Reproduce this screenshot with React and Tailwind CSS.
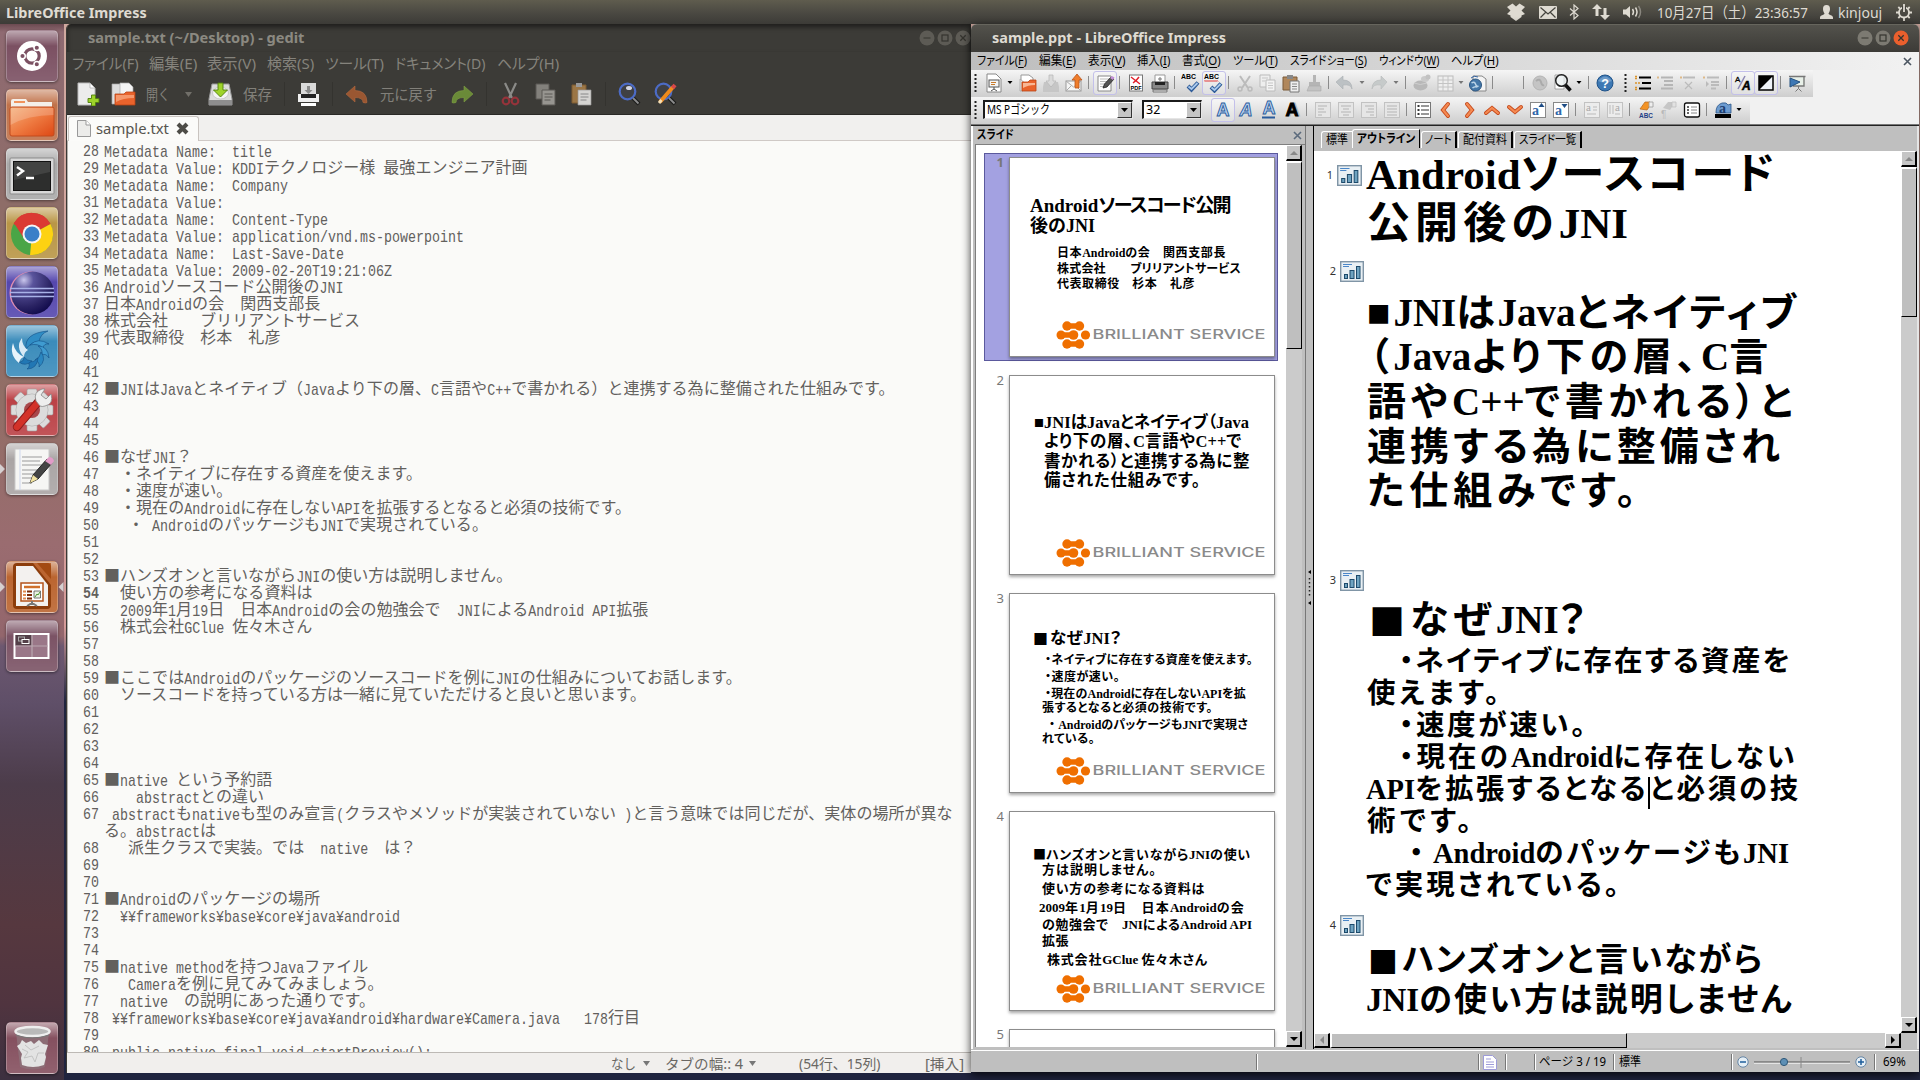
import React, { useLayoutEffect, useRef, useState } from "react";

const CJK = /([\u3000-\u30ff\u3400-\u9fff\uff00-\uffef■]+)/;

/* One line of text stretched to a width: horizontal squeeze for interface labels. */
function Squeeze({ w, className = "", children }) {
  const ref = useRef(null);
  const [k, setK] = useState(1);
  useLayoutEffect(() => {
    if (ref.current.offsetWidth) setK(w / ref.current.offsetWidth);
  }, [w]);
  return (
    <span className={"inline-block whitespace-pre shrink-0 " + className} style={{ width: w }}>
      <span ref={ref} className="inline-block origin-left" style={{ transform: `scaleX(${k})` }}>{children}</span>
    </span>
  );
}

/* One line of document text: extra width is shared between the Japanese characters only. */
function Spread({ w, children }) {
  const ref = useRef(null);
  const [ls, setLs] = useState(0);
  const runs = children.split(CJK).filter(Boolean);
  const n = runs.filter((r) => CJK.test(r)).reduce((a, r) => a + r.length, 0);
  useLayoutEffect(() => {
    if (n) setLs((w - ref.current.getBoundingClientRect().width) / n);
  }, [w, n]);
  return (
    <span ref={ref} className="inline-block whitespace-pre">
      {runs.map((r, i) =>
        CJK.test(r) ? <span key={i} style={{ letterSpacing: ls }}>{r}</span> : <span key={i}>{r}</span>
      )}
    </span>
  );
}

/* ---------- top panel ---------- */
function TopPanel() {
  return (
    <div className="h-[24px] shrink-0 flex items-center bg-linear-to-b from-[#5f5c4e] via-[#4c4a43] to-[#3c3b37] text-[#dfdbd2] text-[15px] pl-[6px]">
      <Squeeze w={141} className="font-bold text-[15px]">LibreOffice Impress</Squeeze>
      <div className="ml-[1360px] flex items-center">
        <svg width="18" height="18" viewBox="0 0 18 18" fill="#dfdbd2"><path d="M5.500 0.500 9 3.500l3.500-3L18 4 14.500 7.500 18 11l-3.500 1.500v1.500L9 18l-5.500-4v-1.500L0 11 3.500 7.500 0 4z" /></svg>
        <svg className="ml-[14px]" width="18" height="13" viewBox="0 0 18 13"><rect width="18" height="13" rx="1" fill="#dfdbd2" /><path d="M1.500 1.500 9 8l7.500-6.500M1.500 11.500 6.500 6.500M16.500 11.500l-5-5" fill="none" stroke="#45443e" strokeWidth="1.200" /></svg>
        <svg className="ml-[12px]" width="10" height="16" viewBox="0 0 10 16" fill="none" stroke="#dfdbd2" strokeWidth="1.200"><path d="M1 4.500 9 11.500 5 15V1l4 3.500L1 11.500" /></svg>
        <svg className="ml-[13px]" width="18" height="16" viewBox="0 0 18 16" fill="#dfdbd2"><path d="M5 0l5 5H6.500v7H3.500V5H0zM13 16l-5-5h3.500V4h3v7H18z" /></svg>
        <svg className="ml-[13px]" width="20" height="16" viewBox="0 0 20 16"><path d="M0 5.500h3L7 2v12l-4-3.500H0z" fill="#dfdbd2" /><path d="M9.500 5q2 3 0 6M12.500 3.500q3 4.500 0 9" fill="none" stroke="#dfdbd2" strokeWidth="1.500" /><path d="M15.500 2q4 6 0 12" fill="none" stroke="#8a877f" strokeWidth="1.500" /></svg>
        <Squeeze w={151} className="ml-[14px] text-[15px]">10月27日（土）23:36:57</Squeeze>
        <svg className="ml-[12px]" width="13" height="14" viewBox="0 0 13 14" fill="#dfdbd2"><path d="M6.500 0C9 0 10 1.500 10 4c0 2-1 3.500-1.500 4.500 0 1.500 4.500 1.500 4.500 4V14H0v-1.500C0 10 4.500 10 4.500 8.500 4 7.500 3 6 3 4 3 1.500 4 0 6.500 0z" /></svg>
        <Squeeze w={44} className="ml-[5px] text-[15px]">kinjouj</Squeeze>
        <svg className="ml-[14px]" width="16" height="17" viewBox="0 0 16 17" fill="none" stroke="#dfdbd2"><circle cx="8" cy="8.500" r="5" strokeWidth="1.800" /><path d="M8 0v3M8 14v3M0 8.500h3M13 8.500h3M2.300 3 4 4.700M13.700 3 12 4.700M2.300 14 4 12.300M13.700 14 12 12.300" strokeWidth="1.800" /><path d="M8 2v6" stroke="#45443e" strokeWidth="4" /><path d="M8 1.500V8" strokeWidth="1.800" /></svg>
      </div>
    </div>
  );
}

/* ---------- launcher ---------- */
function Tile({ className = "", children, pip, active }) {
  return (
    <div className="flex items-center w-[64px] h-[52px] mb-[7px] shrink-0">
      <div className="w-[6px] flex items-center">{pip && <svg width="5" height="10" viewBox="0 0 5 10"><path d="M0 0l5 5-5 5z" fill="#d6d0d1" /></svg>}</div>
      <div className={"w-[52px] h-[52px] rounded-[5px] border border-white/25 flex items-center justify-center bg-linear-to-b from-white/50 via-white/0 via-30% to-white/10 shadow-[0_1px_3px_rgba(0,0,0,.45)] " + className}>
        <svg width="48" height="48" viewBox="0 0 48 48">{children}</svg>
      </div>
      <div className="w-[6px] flex items-center">{active && <svg width="6" height="10" viewBox="0 0 5 10"><path d="M5 0L0 5l5 5z" fill="#d6d0d1" /></svg>}</div>
    </div>
  );
}

function Launcher() {
  return (
    <div className="w-[64px] shrink-0 flex flex-col pt-[6px] bg-[linear-gradient(to_bottom,#6b4a51_0px,#8f6a72_8px,#8e6d68_180px,#926e66_380px,#9a6c70_520px,#93666c_612px,#6d5870_622px,#5f4f68_680px,#4c3c4a_760px,#56383f_900px,#50343f_980px,#3c3040_1056px)] h-full">
      <Tile className="bg-[#7b5062]">
        <circle cx="24" cy="24" r="15" fill="#fff" />
        <circle cx="24" cy="24" r="7.200" fill="none" stroke="#7b5062" strokeWidth="3.200" />
        <g stroke="#fff" strokeWidth="1.500" fill="#7b5062"><circle cx="14.500" cy="24" r="2.800" /><circle cx="28.800" cy="15.800" r="2.800" /><circle cx="28.800" cy="32.200" r="2.800" /></g>
      </Tile>
      <Tile className="bg-[#c0724a]">
        <path d="M3 10q0-2 2-2h13l2 3h24v10H3z" fill="#f4efe9" /><path d="M6 11h11" stroke="#f0935c" strokeWidth="2" />
        <defs><linearGradient id="fo" x1="0" y1="0" x2="1" y2="1"><stop offset="0" stopColor="#f4ae78" /><stop offset=".5" stopColor="#ee7a41" /><stop offset="1" stopColor="#dd4814" /></linearGradient></defs>
        <rect x="2" y="16" width="44" height="29" rx="2" fill="url(#fo)" stroke="#c24a1c" /><path d="M2.500 17h43v7Q20 24 2.500 34z" fill="#fff" opacity=".2" />
      </Tile>
      <Tile className="bg-[#a9a9a9]">
        <rect x="2" y="8" width="44" height="36" rx="1" fill="#d8d8d8" stroke="#8b8b8b" /><rect x="5.500" y="11.500" width="37" height="29" fill="#2d2e2d" stroke="#111" /><path d="M6 12h36v10L6 30z" fill="#fff" opacity=".1" />
        <path d="M9 17l6 4-6 4.500M18 28h8" stroke="#fff" strokeWidth="2.400" fill="none" />
      </Tile>
      <Tile className="bg-[#b99646]">
        <circle cx="24" cy="25" r="21" fill="#4aa546" /><path d="M24 25 5.500 15A21 21 0 0 1 42.500 15z" fill="#db3a33" /><path d="M24 25 42.500 15A21 21 0 0 1 22 46z" fill="#fdd212" /><path d="M24 15h18.500A21 21 0 0 0 6 14l9 14z" fill="#db3a33" /><circle cx="24" cy="25" r="9.500" fill="#f5f5f5" /><circle cx="24" cy="25" r="7.500" fill="#3a7fc8" />
      </Tile>
      <Tile className="bg-[#5547ae]">
        <defs><radialGradient id="ec" cx=".3" cy=".2" r=".9"><stop offset="0" stopColor="#c9c6ec" /><stop offset=".25" stopColor="#5a549c" /><stop offset=".7" stopColor="#2a2363" /><stop offset="1" stopColor="#0c0648" /></radialGradient></defs>
        <circle cx="23" cy="25" r="21.500" fill="#e08db0" /><circle cx="24.500" cy="25" r="21.500" fill="url(#ec)" />
        <path d="M2 20.500h44M2 24.500h44M2 28.500h44" stroke="#a9b2e8" strokeWidth="1.300" />
      </Tile>
      <Tile className="bg-[#3b8cbb]">
        <g stroke="#124f86" strokeWidth=".6">
          <path d="M18 22Q16 6 40 4 32 7 31 15 24 14 18 22z" fill="#2f8cc4" />
          <path d="M22 18q8-8 19-1-5-1-6 4-5-5-13-3z" fill="#3f9bd0" />
          <path d="M30 19q10 0 11 12-3-5-7-3 1-6-4-9z" fill="#3f9bd0" />
          <path d="M33 25q6 8-2 15 1-5-4-7 5-2 6-8z" fill="#2a86c0" />
          <path d="M30 31q-1 11-11 11 4-3 1-7 6 1 10-4z" fill="#2177b4" />
          <path d="M24 34q-7 6-13 1 5 0 5-5 3 4 8 4z" fill="#2177b4" />
        </g>
        <path d="M5 16q-4 12 6 20 1-5 5-6Q7 26 5 16z" fill="#e9f4fa" /><path d="M14 11q-7 9 2 19 0-5 4-7-6-4-6-12z" fill="#d8eaf5" />
      </Tile>
      <Tile className="bg-[#bb4146]">
        <g transform="translate(24 24)" fill="#dcdcdc" stroke="#9d9d9d" strokeWidth=".6">
          {[0, 45, 90, 135].map((a) => <rect key={a} x="-5" y="-21" width="10" height="42" rx="1.500" transform={`rotate(${a})`} />)}
          <circle r="16" />
        </g>
        <circle cx="24" cy="24" r="15.500" fill="#dcdcdc" /><circle cx="24" cy="24" r="8" fill="#a8484c" />
        <path d="M9 41 31 15" stroke="#8f1d1d" strokeWidth="8.500" strokeLinecap="round" /><path d="M9 41 29 17.500" stroke="#d33229" strokeWidth="6.500" strokeLinecap="round" />
        <path d="M28 15q-3-9 6-12l3 0-4 6 5 4 5-5q3 10-6 12-3 1-5 0z" fill="#eee" stroke="#888" strokeWidth=".8" />
      </Tile>
      <Tile className="bg-[#aaa5a5]" pip>
        <rect x="7" y="4" width="34" height="41" fill="#f6f6f4" stroke="#c9c9c9" /><path d="M12 4v41" stroke="#cfd8ee" /><path d="M14 12h20M14 16h18M14 20h20M14 25h17M14 29h12M14 33h14M14 38h10" stroke="#9a9a9a" />
        <path d="M22 38l3-8L39 14l5 4-14 16z" fill="#444" stroke="#222" /><path d="M22 38l3-8 5 4z" fill="#f2e3a0" /><path d="M37 16l4-4q4 0 5 4l-3 4z" fill="#e29cc8" />
      </Tile>
      <div className="h-[59px] shrink-0" />
      <Tile className="bg-[#bb6530]" pip active>
        <path d="M9 0h30q4 0 4 4v38q0 4-4 4H9q-4 0-4-4V4q0-4 4-4z" fill="#8c3d0c" /><path d="M25 0h18v22z" fill="#bb6530" /><path d="M8 3h17l15 19v21H8z" fill="#f3f1ef" /><path d="M29 0h10q4 0 4 4v12z" fill="#a34a12" />
        <rect x="13" y="20" width="22" height="18" fill="#fff" stroke="#b4531b" strokeWidth="1.500" /><path d="M16 24h16" stroke="#d0702b" strokeWidth="2.500" /><path d="M15 28.500h3M15 32h3M15 35.500h3" stroke="#e08a50" strokeWidth="2" /><path d="M19 28.500h5M19 32h5M19 35.500h5" stroke="#7c2c08" strokeWidth="2" /><path d="M26 35v-7h6.500v7z" fill="#e9f2e2" stroke="#555" strokeWidth=".8" /><path d="M27 34l2-3 1 1 2-3" fill="none" stroke="#4c9a32" /><path d="M24 38v3M19 43l5-3 5 3" stroke="#777" strokeWidth="2" fill="none" />
      </Tile>
      <Tile className="bg-[#7b5365]">
        <rect x="6.500" y="12" width="34" height="24" fill="#9a7788" stroke="#fff" strokeWidth="2" /><rect x="7.500" y="13" width="16" height="10.500" fill="#544049" /><path d="M24 13v22M8 24h32" stroke="#b9a8b0" strokeWidth="1.200" /><rect x="10.500" y="15" width="6" height="4" fill="none" stroke="#aaa" /><rect x="14" y="17.500" width="7" height="4" fill="#544049" stroke="#fff" />
      </Tile>
      <div className="mt-auto mb-[-1px]">
        <Tile className="bg-[#85505f]">
          <path d="M8 8h33l-4 35q-12 5-25 0z" fill="#8d6f78" opacity=".9" /><path d="M9 22l3-2 2-4 4 3 5-2 3 3 5-4 4 4 5 1-3 9 1 3-2 8q-11 4-22 0l-1-7 1-4z" fill="#e3e3e3" /><path d="M14 25l6 3-4 6 8-2 3 6 3-9 6 0M17 21l6 5 8-4" fill="none" stroke="#c3c3c3" />
          <ellipse cx="24.500" cy="7.500" rx="17" ry="4.500" fill="#b9b9b9" stroke="#eee" strokeWidth="2.500" /><path d="M8 11q16 6 33 0" fill="none" stroke="#777" />
        </Tile>
      </div>
    </div>
  );
}

/* ---------- gedit ---------- */
function RoundButton({ kind, className }) {
  return (
    <svg className={className} width="16" height="16" viewBox="0 0 16 16">
      <circle cx="8" cy="8" r="7.500" />
      {kind === "min" && <path d="M4.500 8h7" stroke="#35342f" strokeWidth="1.200" />}
      {kind === "max" && <rect x="5" y="5" width="6" height="6" fill="none" stroke="#35342f" strokeWidth="1.200" />}
      {kind === "close" && <path d="M5.300 5.300l5.400 5.400M10.700 5.300l-5.400 5.400" stroke="#35342f" strokeWidth="1.300" />}
    </svg>
  );
}

const fileLines = [
  ["28", "Metadata Name:  title"],
  ["29", "Metadata Value: KDDIテクノロジー様 最強エンジニア計画"],
  ["30", "Metadata Name:  Company"],
  ["31", "Metadata Value:"],
  ["32", "Metadata Name:  Content-Type"],
  ["33", "Metadata Value: application/vnd.ms-powerpoint"],
  ["34", "Metadata Name:  Last-Save-Date"],
  ["35", "Metadata Value: 2009-02-20T19:21:06Z"],
  ["36", "Androidソースコード公開後のJNI"],
  ["37", "日本Androidの会　関西支部長"],
  ["38", "株式会社　　ブリリアントサービス"],
  ["39", "代表取締役　杉本　礼彦"],
  ["40", ""], ["41", ""],
  ["42", "■JNIはJavaとネイティブ（Javaより下の層、C言語やC++で書かれる）と連携する為に整備された仕組みです。"],
  ["43", ""], ["44", ""], ["45", ""],
  ["46", "■なぜJNI？"],
  ["47", "　・ネイティブに存在する資産を使えます。"],
  ["48", "　・速度が速い。"],
  ["49", "　・現在のAndroidに存在しないAPIを拡張するとなると必須の技術です。"],
  ["50", "　 ・ AndroidのパッケージもJNIで実現されている。"],
  ["51", ""], ["52", ""],
  ["53", "■ハンズオンと言いながらJNIの使い方は説明しません。"],
  ["54", "　使い方の参考になる資料は"],
  ["55", "　2009年1月19日　日本Androidの会の勉強会で　JNIによるAndroid API拡張"],
  ["56", "　株式会社GClue 佐々木さん"],
  ["57", ""], ["58", ""],
  ["59", "■ここではAndroidのパッケージのソースコードを例にJNIの仕組みについてお話します。"],
  ["60", "　ソースコードを持っている方は一緒に見ていただけると良いと思います。"],
  ["61", ""], ["62", ""], ["63", ""], ["64", ""],
  ["65", "■native という予約語"],
  ["66", "　　abstractとの違い"],
  ["67", " abstractもnativeも型のみ宣言(クラスやメソッドが実装されていない )と言う意味では同じだが、実体の場所が異な"],
  ["", "る。abstractは"],
  ["68", "　 派生クラスで実装。では　native　は？"],
  ["69", ""], ["70", ""],
  ["71", "■Androidのパッケージの場所"],
  ["72", "  ¥¥frameworks¥base¥core¥java¥android"],
  ["73", ""], ["74", ""],
  ["75", "■native methodを持つJavaファイル"],
  ["76", "　 Cameraを例に見てみてみましょう。"],
  ["77", "  native　の説明にあった通りです。"],
  ["78", " ¥¥frameworks¥base¥core¥java¥android¥hardware¥Camera.java   178行目"],
  ["79", ""],
  ["80", " public native final void startPreview();"],
];

const Mono = ({ children, className = "" }) => (
  <span className={"inline-block whitespace-pre font-['Liberation_Mono',monospace] text-[13.33px] leading-[17px] scale-y-[1.2] " + className}>{children}</span>
);

function Gedit() {
  return (
    <div className="w-[905px] h-[1049px] shrink-0 flex flex-col rounded-tl-[5px] overflow-hidden border-l border-[#3a3935] text-[15px]">
      <div className="h-[28px] shrink-0 bg-[#3c3b37] flex items-center pl-[21px] pb-px text-[#8b8981] shadow-[inset_0_3px_5px_rgba(0,0,0,.5)]">
        <Squeeze w={216} className="font-bold">sample.txt (~/Desktop) - gedit</Squeeze>
        <RoundButton kind="min" className="ml-[615px] fill-[#5d5b55]" />
        <RoundButton kind="max" className="ml-[2px] fill-[#5d5b55]" />
        <RoundButton kind="close" className="ml-[2px] fill-[#5d5b55]" />
      </div>
      <div className="h-[23px] shrink-0 bg-[#3c3b37] flex items-center pl-[5px] text-[#85837c] [font-feature-settings:'palt']">
        <Squeeze w={67}>ファイル(F)</Squeeze>
        <Squeeze w={48} className="ml-[10px]">編集(E)</Squeeze>
        <Squeeze w={49} className="ml-[10px]">表示(V)</Squeeze>
        <Squeeze w={47} className="ml-[11px]">検索(S)</Squeeze>
        <Squeeze w={59} className="ml-[11px]">ツール(T)</Squeeze>
        <Squeeze w={91} className="ml-[11px]">ドキュメント(D)</Squeeze>
        <Squeeze w={62} className="ml-[11px]">ヘルプ(H)</Squeeze>
      </div>
      <div className="h-[40px] shrink-0 bg-[#3c3b37] border-b border-[#2a2926] flex items-center pl-[10px] pb-px text-[#82807a]">
        <svg width="23" height="24" viewBox="0 0 23 24"><path d="M1 1h12l5 5v17H1z" fill="#ececec" stroke="#bbb" /><path d="M13 1v5h5z" fill="#fff" stroke="#aaa" strokeWidth=".7" /><path d="M14.500 13h4v3.500H22v4h-3.500V24h-4v-3.500H11v-4h3.500z" fill="#9ed32a" stroke="#4e7d0c" strokeWidth=".9" /></svg>
        <svg className="ml-[11px]" width="25" height="24" viewBox="0 0 25 24"><path d="M1 2h10l4 3v17H1z" fill="#ddd" stroke="#aaa" strokeWidth=".7" /><path d="M9 1h9l4 4v8H9z" fill="#f4f4f4" stroke="#aaa" strokeWidth=".7" /><path d="M4 12h9l2-2h9v13H4z" fill="#e9632c" stroke="#b94414" strokeWidth=".8" /><path d="M5 13h18v3Q12 16 5 20z" fill="#f7a57d" opacity=".8" /></svg>
        <Squeeze w={24} className="ml-[10px]">開く</Squeeze>
        <svg className="ml-[15px]" width="7" height="5" viewBox="0 0 7 5"><path d="M0 0h7L3.500 5z" fill="#716f69" /></svg>
        <svg className="ml-[16px]" width="25" height="25" viewBox="0 0 25 25"><path d="M4 2h17l3 15v6H1v-6z" fill="#dcdcdc" stroke="#9a9a9a" /><path d="M1 18h23v5H1z" fill="#8e8e8e" /><ellipse cx="12.500" cy="11" rx="8" ry="6" fill="#f4f4f4" stroke="#bbb" strokeWidth=".7" /><path d="M10 1h5v7h4.500l-7 7-7-7H10z" fill="#9ed32a" stroke="#4e7d0c" strokeWidth=".9" /></svg>
        <Squeeze w={29} className="ml-[10px]">保存</Squeeze>
        <div className="ml-[12px] w-px h-[24px] bg-[#34332f]" />
        <svg className="ml-[12px]" width="23" height="24" viewBox="0 0 23 24"><path d="M4 1h15v12H4z" fill="#d9d9d9" /><path d="M10 4h3v4h2.500l-4 4-4-4H10z" fill="#8a8a8a" /><path d="M1 12h21v8H1z" fill="#efefef" /><path d="M4 12h15v4H4z" fill="#222" /><path d="M4 21h15v3H4z" fill="#fff" /></svg>
        <div className="ml-[12px] w-px h-[24px] bg-[#34332f]" />
        <svg className="ml-[13px]" width="22" height="19" viewBox="0 0 22 19"><path d="M9 1v4.500q12 0 12 12-1 1-4 0 0-5-8-5V17L0 9z" fill="#9a5732" stroke="#b06a42" strokeWidth=".6" /></svg>
        <Squeeze w={57} className="ml-[12px]">元に戻す</Squeeze>
        <svg className="ml-[14px]" width="22" height="19" viewBox="0 0 22 19"><path d="M13 1v4.500q-12 0-12 12 1 1 4 0 0-5 8-5V17l9-8z" fill="#6a8a38" stroke="#7fa044" strokeWidth=".6" /></svg>
        <div className="ml-[13px] w-px h-[24px] bg-[#34332f]" />
        <svg className="ml-[14px]" width="19" height="24" viewBox="0 0 19 24" fill="none"><path d="M4 1l7 15M15 1L8 16" stroke="#8a8a87" strokeWidth="2.200" /><circle cx="5" cy="19" r="3.300" stroke="#95333a" strokeWidth="2.200" /><circle cx="14" cy="19" r="3.300" stroke="#95333a" strokeWidth="2.200" /></svg>
        <svg className="ml-[15px]" width="21" height="23" viewBox="0 0 21 23" fill="#83817c" stroke="#5a5955"><path d="M1 1h13v15H1z" /><path d="M7 7h13v15H7z" fill="#979590" /><path d="M9.500 11h8M9.500 14h8M9.500 17h6" /></svg>
        <svg className="ml-[15px]" width="22" height="24" viewBox="0 0 22 24"><path d="M1 3h14v18H1z" fill="#9b7646" stroke="#7c5b31" /><path d="M5 1h6v4H5z" fill="#999" /><path d="M7 8h13v15H7z" fill="#d6d5d2" stroke="#999" strokeWidth=".7" /><path d="M9.500 12h8M9.500 15h8M9.500 18h6" stroke="#888" /></svg>
        <div className="ml-[12px] w-px h-[24px] bg-[#34332f]" />
        <svg className="ml-[12px]" width="23" height="24" viewBox="0 0 23 24"><path d="M15 16l6 6" stroke="#1c1c1b" strokeWidth="4" /><path d="M15 16l5.500 5.500" stroke="#8c8c8c" strokeWidth="1.800" /><circle cx="9.500" cy="9.500" r="7.800" fill="#3f4044" stroke="#4c6bc5" strokeWidth="2.200" /><ellipse cx="11" cy="6" rx="3" ry="2" fill="#e4e8f5" opacity=".9" /></svg>
        <svg className="ml-[13px]" width="23" height="24" viewBox="0 0 23 24"><path d="M15 16l6 6" stroke="#1c1c1b" strokeWidth="4" /><path d="M15 16l5.500 5.500" stroke="#8c8c8c" strokeWidth="1.800" /><circle cx="9.500" cy="9.500" r="7.800" fill="#3f4044" stroke="#4c6bc5" strokeWidth="2.200" /><path d="M6 20L19 5" stroke="#ef8a1d" strokeWidth="4" /><path d="M18.500 6l2.500-3" stroke="#d94848" strokeWidth="4" /><path d="M5 21l2.500-3" stroke="#f5dfb5" strokeWidth="3" /></svg>
      </div>
      <div className="h-[26px] shrink-0 bg-[#f1f0ee] border-b border-[#cfc9c6] flex items-end pl-px">
        <div className="w-[131px] h-[25px] mb-[-1px] pb-[2px] rounded-t-[3px] bg-[#fbfbf9] border border-b-0 border-[#c9c4c0] flex items-center pl-[8px] text-[#56544f]">
          <svg width="14" height="17" viewBox="0 0 14 17"><path d="M.5.500h8.500l4.500 4.500v11.500H.5z" fill="#ececea" stroke="#999" /><path d="M9 .5V5h4.500" fill="#fff" stroke="#999" /></svg>
          <Squeeze w={73} className="ml-[5px]">sample.txt</Squeeze>
          <svg className="ml-[7px]" width="13" height="13" viewBox="0 0 13 13"><path d="M2 2l9 9M11 2l-9 9" stroke="#4d4c47" strokeWidth="4" /></svg>
        </div>
      </div>
      <div className="flex-1 min-h-0 overflow-hidden bg-[#fafaf8] border-l border-[#b5b0ac] text-[#62605d] text-[16px] leading-[17px]">
        {fileLines.map(([n, t], i) => (
          <div key={i} className="h-[17px] flex whitespace-pre">
            <div className="w-[31px] shrink-0 text-right"><Mono className={n === "54" ? "font-bold" : ""}>{n}</Mono></div>
            <div className="ml-[5px] font-['Noto_Sans_CJK_JP',sans-serif]">
              {t.split(CJK).filter(Boolean).map((r, k) => (CJK.test(r) ? <span key={k} className="tracking-[0.04px]">{r}</span> : <Mono key={k}>{r}</Mono>))}
            </div>
          </div>
        ))}
      </div>
      <div className="h-[21px] shrink-0 bg-[#f1efed] border-t border-[#bdb9b5] flex items-center pl-[544px] text-[#6a6864] text-[14px]">
        <Squeeze w={25}>なし</Squeeze>
        <svg className="ml-[7px]" width="7" height="5" viewBox="0 0 7 5"><path d="M0 0h7L3.500 5z" fill="#777" /></svg>
        <Squeeze w={78} className="ml-[15px]">タブの幅:: 4</Squeeze>
        <svg className="ml-[6px]" width="7" height="5" viewBox="0 0 7 5"><path d="M0 0h7L3.500 5z" fill="#777" /></svg>
        <Squeeze w={81} className="ml-[43px]">(54行、15列)</Squeeze>
        <Squeeze w={39} className="ml-[45px]">[挿入]</Squeeze>
      </div>
    </div>
  );
}

/* ---------- Impress toolbars ---------- */
const Sep = ({ className = "" }) => <div className={"w-[2px] h-[13px] ml-[2px] mr-[3px] border-l border-[#8b8b8b] shrink-0 " + className} />;
const Grip = ({ className = "" }) => (
  <svg className={"shrink-0 " + className} width="3" height="20" viewBox="0 0 3 20"><path d="M1.500 1v19" stroke="#222" strokeWidth="2" strokeDasharray="2 2" /></svg>
);
const Arr = ({ off, className = "" }) => (
  <svg className={"shrink-0 " + className} width="8" height="22" viewBox="0 0 8 22"><path d="M1.500 9h5L4 12z" fill={off ? "#777" : "#000"} /></svg>
);
const Ico = ({ boxed, children }) => (
  <div className={"w-[22px] h-[22px] shrink-0 flex items-center justify-center " + (boxed ? "outline outline-[#c3c0ea] bg-white/30 rounded-[2px]" : "")}>
    <svg width="20" height="20" viewBox="0 0 20 20">{children}</svg>
  </div>
);
const AbcLabel = ({ y = 6 }) => <text x="0" y={y} fontSize="7" fontWeight="900" textLength="15" lengthAdjust="spacingAndGlyphs" fontFamily="Liberation Sans">ABC</text>;
const LetterA = ({ italic, x = 10, fill, stroke }) => (
  <text x={x} y="16" textAnchor="middle" fontSize="18" fontWeight="bold" fontStyle={italic ? "italic" : "normal"} fontFamily="Liberation Sans" fill={fill} stroke={stroke} strokeWidth=".9">A</text>
);

function StandardBar() {
  return (
    <div className="w-[842px] h-[27px] flex items-center gap-px pl-[3px] pb-[2px] bg-linear-to-b from-[#f5f5f5] to-[#cecece]">
      <Grip className="mr-[5px]" />
      <Ico><path d="M3 1h9l5 5v13H3z" fill="#fff" stroke="#888" /><rect x="5" y="7" width="10" height="7" fill="#f5f5f5" stroke="#555" /><path d="M7 9.500h5M7 11.500h4" stroke="#c87a2b" /><path d="M10 14v2M7 18l3-2 3 2" stroke="#555" fill="none" /></Ico>
      <Arr className="mr-[2px]" />
      <Ico><path d="M3 2h8l4 3v6H3z" fill="#fff" stroke="#999" /><path d="M2 6l0 12h3l2-8z" fill="#ddd" stroke="#999" strokeWidth=".6" /><path d="M4 9h6l2-2h6v11H4z" fill="#e9632c" stroke="#b94414" strokeWidth=".8" /><path d="M5 10h12v2q-7 0-12 3z" fill="#f8b795" /></Ico>
      <Ico><path d="M3 9h14l1 5v5H2v-5z" fill="#c6c6c6" /><path d="M8 2h4v6h3l-5 6-5-6h3z" fill="#dadada" stroke="#b5b5b5" strokeWidth=".7" /></Ico>
      <Ico><rect x="2" y="8" width="15" height="10" fill="#f5f5f5" stroke="#999" /><path d="M2 8l7.500 6L17 8M2 18l5-5M17 18l-5-5" fill="none" stroke="#aaa" /><path d="M13 1l5 6h-3v8h-4V7H8z" fill="#ef7d2b" stroke="#b9531a" strokeWidth=".8" /></Ico>
      <Sep />
      <Ico boxed><path d="M3 3h13v15H3z" fill="#fff" stroke="#888" /><path d="M5 6h9M5 8.500h9M5 11h6M5 13.500h4" stroke="#bbb" /><path d="M8 15l1.500-4L16 4l3 2-7 8z" fill="#555" stroke="#222" strokeWidth=".8" /><path d="M15 5l2-2 2.500 1.500L18 7z" fill="#c590d8" /></Ico>
      <Sep />
      <Ico><rect x="3.500" y="2" width="13" height="16" fill="#fff" stroke="#777" /><path d="M5 4l9 7M13 4q-2 3-6 6" stroke="#e0202a" strokeWidth="1.400" fill="none" /><text x="4.500" y="17" fontSize="5.500" fontWeight="bold" textLength="11" fontFamily="Liberation Sans">PDF</text></Ico>
      <div className="w-0" />
      <Ico><path d="M5 2h10v8H5z" fill="#fff" stroke="#999" /><path d="M8 6h4M10 4v4" stroke="#777" /><path d="M2 9h16v7H2z" fill="#888" stroke="#444" /><path d="M5 9h10v3H5z" fill="#222" /><path d="M3 17h14v2H3z" fill="#ddd" stroke="#555" strokeWidth=".7" /></Ico>
      <Sep />
      <Ico><AbcLabel /><path d="M7 13l3.500 3.500L17 9.500" fill="none" stroke="#2f5c99" strokeWidth="4" /><path d="M7.500 13.500l3 2.500L16.500 10" fill="none" stroke="#a8c8ec" strokeWidth="1.800" /></Ico>
      <Ico boxed><AbcLabel /><path d="M0 8.500l1-1 1 1 1-1 1 1 1-1 1 1 1-1 1 1 1-1 1 1 1-1 1 1 1-1 1 1" fill="none" stroke="#e02020" /><path d="M7 14l3.500 3.500L17 10.500" fill="none" stroke="#2f5c99" strokeWidth="4" /><path d="M7.500 14.500l3 2.500 6-6" fill="none" stroke="#a8c8ec" strokeWidth="1.800" /></Ico>
      <Sep />
      <Ico><path d="M5 3l8 12M15 3L7 15" stroke="#bbb" strokeWidth="2" /><circle cx="5" cy="16" r="2" fill="none" stroke="#bbb" strokeWidth="1.500" /><circle cx="15" cy="16" r="2" fill="none" stroke="#bbb" strokeWidth="1.500" /></Ico>
      <Ico><path d="M2 2h10v12H2z" fill="#eee" stroke="#bbb" /><path d="M8 7h9v11H8z" fill="#f3f3f3" stroke="#bbb" /><path d="M10 10h5M10 12.500h5M10 15h5M4 5h6M4 8h3" stroke="#c5c5c5" /></Ico>
      <Ico><path d="M2 4h14v13H2z" fill="#b0875c" stroke="#7a5b39" /><path d="M6 2h6v4H6z" fill="#888" /><path d="M9 8h9v11H9z" fill="#eee" stroke="#777" /><path d="M11 11h5M11 13.500h5M11 16h5" stroke="#888" /></Ico>
      <Ico><path d="M9 2h3v7h4v4H5V9h4z" fill="#b5b5b5" /><path d="M5 13h12v5H3z" fill="#c2c2c2" stroke="#aaa" strokeWidth=".6" /></Ico>
      <Sep />
      <Ico><path d="M8 3v4q9 0 9 9-1-5-9-4v4L1 9z" fill="#bcc1c4" stroke="#a9aeb2" strokeWidth=".6" /></Ico>
      <Arr off className="ml-px mr-px" />
      <Ico><path d="M12 3v4q-9 0-9 9 1-5 9-4v4l6-7z" fill="#c6caca" stroke="#b5b9b9" strokeWidth=".6" /></Ico>
      <Arr off className="ml-px mr-[2px]" />
      <Sep />
      <Ico><ellipse cx="8.500" cy="12.500" rx="7" ry="5" fill="#b8b8b8" /><path d="M2 10q6 3 13 0" stroke="#cfcfcf" fill="none" /><ellipse cx="13" cy="6" rx="4" ry="3" fill="#cacaca" /><circle cx="16" cy="4" r="2.500" fill="#c2c2c2" /></Ico>
      <Ico><rect x="3" y="3" width="15" height="15" fill="#eee" stroke="#bbb" /><path d="M3 7h15M3 10.500h15M3 14h15M8 3v15M13 3v15" stroke="#c4c4c4" /></Ico>
      <Arr off className="mr-px" />
      <Ico><path d="M5 3h9l4 3v12H5z" fill="#f4f4f4" stroke="#888" /><circle cx="7.500" cy="12" r="6" fill="#4478a8" stroke="#2b5580" /><path d="M3.500 10q3-2 4 1t3 2M4.500 15q2-2 5-1" stroke="#b9d3e6" strokeWidth="1.500" fill="none" /><path d="M3 5q3-3 7-1" stroke="#3465a4" fill="none" /></Ico>
      <Sep />
      <Sep className="!ml-[25px]" />
      <Ico><circle cx="10" cy="10" r="7" fill="#c4c4c4" stroke="#b4b4b4" /><path d="M6 8q4-3 5 1t3 3" stroke="#aaa" strokeWidth="2" fill="none" /></Ico>
      <Ico><path d="M2 2h9v14H2z" fill="#fff" stroke="#888" strokeWidth=".7" /><circle cx="8.500" cy="7.500" r="5.800" fill="#e8eef0" fillOpacity=".7" stroke="#222" strokeWidth="1.500" /><path d="M12.500 12l5 5.500" stroke="#111" strokeWidth="3.500" /></Ico>
      <Arr className="mr-[2px]" />
      <Sep />
      <Ico><circle cx="10" cy="10" r="8" fill="#3c78b4" stroke="#1f5288" /><path d="M3 8q7-9 14 0-7 3-14 0z" fill="#fff" opacity=".25" /><text x="10" y="14.500" textAnchor="middle" fontSize="12.500" fontWeight="bold" fill="#fff" fontFamily="Liberation Sans">?</text></Ico>
      <Grip className="ml-[7px] mr-[4px]" />
      <Ico><path d="M6 4.500h12M9 10h9M6 15.500h12" stroke="#000" strokeWidth="2.200" /><path d="M2 3.500h2M2 5.500h2M2 10h2M5 10h2M2 14.500h2M2 16.500h2" stroke="#d9932b" strokeWidth="1.500" /></Ico>
      <Ico><path d="M5 4.500h12M8 8h9M8 12h9M5 15.500h12" stroke="#b5b5b5" strokeWidth="2" /><path d="M1 4.500h2" stroke="#ddb989" strokeWidth="2" /></Ico>
      <Ico><path d="M4 4.500h12" stroke="#bbb" strokeWidth="2" /><path d="M6 9l7 7M13 9l-7 7" stroke="#bbb" strokeWidth="1.200" /><path d="M1 4.500h2" stroke="#ddb989" strokeWidth="2" /></Ico>
      <Ico><path d="M5 4.500h12M9 9h8M9 12h8M9 15.500h5" stroke="#bbb" strokeWidth="1.800" /><path d="M4 8l3 3-3 3z" fill="#bbb" /><path d="M1 4.500h2" stroke="#ddb989" strokeWidth="2" /></Ico>
      <Sep />
      <Ico boxed><text x="2" y="9" fontSize="8" fontFamily="Liberation Sans" stroke="#000" strokeWidth=".3">A</text><path d="M5 16L12 3" stroke="#8b87b5" strokeWidth="1.500" /><text x="9" y="17" fontSize="12" fontWeight="bold" fontStyle="italic" fontFamily="Liberation Sans" stroke="#000" strokeWidth=".5">A</text></Ico>
      <Ico boxed><rect x="3" y="3" width="14" height="14" fill="#eef2f8" stroke="#000" strokeWidth="1.500" /><path d="M3 3h14L3 17z" fill="#000" /></Ico>
      <Sep />
      <Ico><path d="M5 3h13v10H5z" fill="#e8f0e8" /><path d="M2 3.500h16.500M17 4v9H6" fill="none" stroke="#777" strokeWidth="1.400" /><path d="M3 5l10 4-10 5z" fill="#3e78b5" stroke="#24507f" /><path d="M11.500 13v2.500l-3 3M11.500 15.500l3 3" stroke="#777" fill="none" /></Ico>
    </div>
  );
}

const Combo = ({ text, tw, className }) => (
  <div className={"h-[19px] shrink-0 flex items-center bg-white border-t-2 border-l-2 border-t-[#1b1b1b] border-l-[#1b1b1b] border-b border-r border-b-[#e5e5e5] border-r-[#e5e5e5] pl-[2px] text-[12.5px] " + className}>
    <Squeeze w={tw}>{text}</Squeeze>
    <div className="ml-auto w-[15px] h-[16px] bg-[#c5c5c5] border border-t-white border-l-white border-b-[#333] border-r-[#333] flex items-center justify-center">
      <svg width="7" height="4" viewBox="0 0 7 4"><path d="M0 0h7L3.500 4z" /></svg>
    </div>
  </div>
);

const AlignIcon = ({ d }) => <Ico><rect x="2.500" y="2.500" width="15" height="15" fill="#e6e6e6" stroke="#c2c2c2" /><path d={d} stroke="#b3b3b3" strokeWidth="1.200" /></Ico>;
const Chevron = ({ d }) => <Ico><path d={d} fill="none" stroke="#c4491c" strokeWidth="4" strokeLinecap="round" /><path d={d} fill="none" stroke="#f58a52" strokeWidth="2.200" strokeLinecap="round" /></Ico>;

function TextBar() {
  return (
    <div className="w-[779px] h-[27px] flex items-center gap-px pl-[3px] pb-[2px] bg-linear-to-b from-[#f5f5f5] to-[#cecece]">
      <Grip className="mr-[5px]" />
      <Combo text="MS Pゴシック" tw={63} className="w-[150px] mr-[8px]" />
      <Combo text="32" tw={14} className="w-[60px] mr-[9px]" />
      <Ico boxed><LetterA fill="#b9d1ef" stroke="#2a5c9c" /></Ico>
      <Ico><LetterA italic fill="#b9d1ef" stroke="#2a5c9c" /></Ico>
      <Ico><g transform="translate(0 -2)"><LetterA fill="#b9d1ef" stroke="#2a5c9c" /></g><path d="M3 17.500h13" stroke="#2a5c9c" strokeWidth="2" /></Ico>
      <Ico><LetterA x={11.5} fill="#bbb" stroke="#bbb" /><LetterA fill="#000" stroke="#000" /></Ico>
      <Sep />
      <AlignIcon d="M5 6h9M5 9h6M5 12h8M5 15h4" />
      <AlignIcon d="M5 6h10M7 9h6M5 12h10M7 15h6" />
      <AlignIcon d="M6 6h9M9 9h6M7 12h8M11 15h4" />
      <AlignIcon d="M5 6h10M5 9h10M5 12h10M5 15h10" />
      <Sep />
      <Ico><rect x="2.500" y="2.500" width="15" height="15" fill="#fff" stroke="#777" /><path d="M8 6h8M8 10h8M8 14h8" stroke="#777" strokeWidth="1.300" /><path d="M4.500 6h2M4.500 10h2M4.500 14h2" stroke="#333" strokeWidth="2" /></Ico>
      <Chevron d="M12 4l-5 6 5 6" />
      <Chevron d="M8 4l5 6-5 6" />
      <Chevron d="M4 13l6-5 6 5" />
      <Chevron d="M4 7l6 5 6-5" />
      <Ico><rect x="2.500" y="2.500" width="15" height="15" fill="#fff" stroke="#888" /><text x="4" y="15" fontSize="14" fontWeight="bold" fill="#2f67a8" fontFamily="Liberation Serif">a</text><path d="M10.500 7h6l-3-4z" fill="#1d4c85" /></Ico>
      <Ico><rect x="2.500" y="2.500" width="15" height="15" fill="#fff" stroke="#888" /><text x="4" y="15" fontSize="14" fontWeight="bold" fill="#2f67a8" fontFamily="Liberation Serif">a</text><path d="M10.500 4h6l-3 4z" fill="#1d4c85" /></Ico>
      <Sep />
      <Ico><rect x="2.500" y="2.500" width="15" height="15" fill="#ececec" stroke="#c2c2c2" /><text x="4" y="11" fontSize="11" fill="#a8a8a8" fontFamily="Liberation Serif">a</text><path d="M11 7h4M11 10h4M5 14h9" stroke="#bbb" /></Ico>
      <Ico><rect x="2.500" y="2.500" width="15" height="15" fill="#ececec" stroke="#c2c2c2" /><text x="10" y="11" fontSize="11" fill="#a8a8a8" fontFamily="Liberation Serif">a</text><path d="M5 5v9M8 5v9M10 14h5" stroke="#bbb" /></Ico>
      <Sep />
      <Ico><path d="M4 9l5-7h5l1 2-4 6z" fill="#f39325" stroke="#b5651a" strokeWidth=".7" /><path d="M13 2h4v5h-4z" fill="#eee" stroke="#999" strokeWidth=".8" /><text x="3" y="17.500" fontSize="7.500" fontWeight="bold" textLength="14" lengthAdjust="spacingAndGlyphs" fill="#1f3f87" fontFamily="Liberation Sans">ABC</text></Ico>
      <Ico><path d="M4 8l5-6h5l1 2-4 6z" fill="#c6c6c6" /><path d="M13 2h4v5h-4z" fill="#e2e2e2" stroke="#c0c0c0" strokeWidth=".8" /><text x="2" y="18" fontSize="10" fill="#b9b9b9" fontFamily="Liberation Sans">¶</text></Ico>
      <Ico><rect x="2.500" y="3" width="15" height="14" rx="2" fill="#fff" stroke="#111" strokeWidth="1.300" /><path d="M9 7h6M9 10h6M9 13h6" stroke="#888" /><path d="M5 7h2M5 10h2M5 13h2" stroke="#333" strokeWidth="1.500" /></Ico>
      <Sep />
      <Ico><path d="M3 12q0-7 6-9 5-1 6 2l3-1v9H3z" fill="#6d9bd0" stroke="#2b5588" strokeWidth=".8" /><text x="6" y="13" fontSize="14" fontWeight="bold" fill="#1d3f70" fontFamily="Liberation Serif">a</text><rect x="2" y="14" width="16" height="4" fill="#000" /></Ico>
      <Arr />
    </div>
  );
}

/* ---------- Impress ---------- */
const U = ({ children }) => <span className="underline underline-offset-2">{children}</span>;

function Logo() {
  return (
    <svg className="mt-auto ml-[46px] shrink-0" width="210" height="28" viewBox="0 0 210 28">
      <path d="M5 14h12M11 5h12M11 23h12" stroke="#ef6f00" strokeLinecap="round" strokeWidth="5.500" />
      <g fill="#ef6f00"><circle cx="5" cy="14" r="4.500" /><circle cx="17.500" cy="14" r="4.800" /><circle cx="29.500" cy="14" r="4.600" /><circle cx="11" cy="5" r="4.700" /><circle cx="23.500" cy="5" r="4.700" /><circle cx="11" cy="23" r="4.700" /><circle cx="23.500" cy="23" r="4.700" /></g>
      <text x="36.500" y="18" fontSize="13" fontFamily="Inter, sans-serif" fontWeight="500" fill="#8a8a8a" textLength="173" lengthAdjust="spacingAndGlyphs">BRILLIANT SERVICE</text>
    </svg>
  );
}

function Slide({ n, selected, children, className = "" }) {
  return (
    <div className={"h-[208px] w-[294px] mb-[10px] shrink-0 flex pt-[3px] border " + (selected ? "bg-[#a3a1e1] border-[#5b599d]" : "border-transparent")}>
      <div className={"w-[19px] text-right text-[13px] leading-[11px] text-[#777] " + (selected ? "font-bold text-[#666]" : "")}>{n}</div>
      <div className={"ml-[5px] w-[266px] h-[200px] bg-white border border-[#8c8c8c] shadow-[0_2px_3px_rgba(0,0,0,.35)] flex flex-col pb-[7px] font-['Liberation_Serif','Noto_Sans_CJK_JP',serif] font-bold text-black [font-feature-settings:'palt'] " + className}>
        {children}
        <Logo />
      </div>
    </div>
  );
}

function BarButton({ d, off, className = "" }) {
  return (
    <div className={"w-[16px] h-[16px] shrink-0 bg-[#c5c5c5] border-t border-l border-t-white border-l-white border-b-2 border-r-2 border-b-black border-r-black flex items-center justify-center " + className}>
      <svg width="8" height="8" viewBox="0 0 8 8"><path d={d} fill={off ? "#888" : "#000"} /></svg>
    </div>
  );
}
const upD = "M0 6h8L4 2z", downD = "M0 2h8L4 6z", leftD = "M6 0v8L2 4z", rightD = "M2 0v8l4-4z";

function SlidePane() {
  return (
    <div className="w-[334px] flex flex-col bg-[#bfbfbf] border-l-2 border-white">
      <div className="h-[18px] shrink-0 flex items-center pl-[4px] text-[12px] font-bold text-black [font-feature-settings:'palt']">
        <Squeeze w={37}>スライド</Squeeze>
        <svg className="ml-[279px]" width="9" height="9" viewBox="0 0 9 9"><path d="M1 1l7 7M8 1L1 8" stroke="#5b6a7c" strokeWidth="1.600" /></svg>
      </div>
      <div className="h-[903px] flex border-t border-l border-[#7f7f7f] ml-[2px]">
        <div className="w-[310px] h-full bg-white pl-[8px] pt-[8px] flex flex-col overflow-hidden">
          <Slide n="1" selected className="pt-[38px]">
            <div className="ml-[20px] text-[19px] leading-[20px] h-[20px]"><Spread w={200}>Androidソースコード公開</Spread></div>
            <div className="ml-[20px] text-[18px] leading-[20px] h-[20px]"><Spread w={65}>後のJNI</Spread></div>
            <div className="ml-[47px] mt-[10px] text-[12px] leading-[15.5px]">
              <div className="h-[15.5px]"><Spread w={169}>日本Androidの会　関西支部長</Spread></div>
              <div className="h-[15.5px]"><Spread w={184}>株式会社　　ブリリアントサービス</Spread></div>
              <div className="h-[15.5px]"><Spread w={138}>代表取締役　杉本　礼彦</Spread></div>
            </div>
          </Slide>
          <Slide n="2" className="pt-[37px]">
            <div className="ml-[34px] text-[16.5px] leading-[19.3px] *:h-[19.3px]">
              <div className="ml-[-10px]"><Spread w={215}>■JNIはJavaとネイティブ（Java</Spread></div>
              <div><Spread w={198}>より下の層、C言語やC++で</Spread></div>
              <div><Spread w={206}>書かれる）と連携する為に整</Spread></div>
              <div><Spread w={157}>備された仕組みです。</Spread></div>
            </div>
          </Slide>
          <Slide n="3" className="pt-[35px]">
            <div className="ml-[23px] text-[16.5px] leading-[20px] h-[20px] flex"><span className="font-['Noto_Sans_CJK_JP'] text-[15px]">■</span><span className="ml-[2px]"><Spread w={72}>なぜJNI？</Spread></span></div>
            <div className="ml-[32px] mt-[4px] text-[12px] leading-[14px] *:h-[14px]">
              <div className="ml-[3px]"><Spread w={208}>・ネイティブに存在する資産を使えます。</Spread></div>
              <div className="ml-[3px] mt-[3px]"><Spread w={75}>・速度が速い。</Spread></div>
              <div className="ml-[3px] mt-[3px]"><Spread w={201}>・現在のAndroidに存在しないAPIを拡</Spread></div>
              <div><Spread w={171}>張するとなると必須の技術です。</Spread></div>
              <div className="ml-[7px] mt-[3px]"><Spread w={199}>・ AndroidのパッケージもJNIで実現さ</Spread></div>
              <div><Spread w={53}>れている。</Spread></div>
            </div>
          </Slide>
          <Slide n="4" className="pt-[34px]">
            <div className="ml-[32px] text-[13px] leading-[16.3px] *:h-[16.3px]">
              <div className="ml-[-9px]"><span className="font-['Noto_Sans_CJK_JP']">■</span><Spread w={205}>ハンズオンと言いながらJNIの使い</Spread></div>
              <div><Spread w={115}>方は説明しません。</Spread></div>
              <div className="mt-[2px]"><Spread w={163}>使い方の参考になる資料は</Spread></div>
              <div className="ml-[-3px] mt-[3.5px]"><Spread w={206}>2009年1月19日　日本Androidの会</Spread></div>
              <div><Spread w={210}>の勉強会で　JNIによるAndroid API</Spread></div>
              <div><Spread w={27}>拡張</Spread></div>
              <div className="ml-[5px] mt-[3px]"><Spread w={161}>株式会社GClue 佐々木さん</Spread></div>
            </div>
          </Slide>
          <Slide n="5" />
        </div>
        <div className="w-[16px] flex flex-col bg-[#cbcbcb]">
          <BarButton d={upD} off />
          <div className="h-[188px] bg-[#bfbfbf] border-t-2 border-l border-t-white border-l-white border-b border-r border-b-black border-r-black" />
          <BarButton d={downD} className="mt-auto" />
        </div>
      </div>
    </div>
  );
}

function SlideGlyph({ big }) {
  return (
    <svg className="shrink-0" width={big ? 25 : 24} height="21" viewBox="0 0 24 21" preserveAspectRatio="none">
      <rect x=".7" y=".7" width="22.600" height="19.600" fill="#e9f0f4" stroke="#8095a6" strokeWidth="1.400" /><path d="M3 3.500h9M3 5.500h6" stroke="#4a86c8" strokeWidth="1.200" />
      <g fill="#6fa3c0" stroke="#1d4a6b" strokeWidth="1"><rect x="4.500" y="13.500" width="3" height="4" /><rect x="10" y="9.500" width="4" height="8" /><rect x="16.500" y="5.500" width="3.500" height="12" /></g>
    </svg>
  );
}

function Section({ n, big, className, textClass, children }) {
  return (
    <div className={"flex shrink-0 " + className}>
      <div className="flex h-[21px] items-center text-[11px] text-[#333]">
        <div className={"text-right " + (big ? "w-[19px]" : "w-[22px]")}>{n}</div>
        <div className="ml-[4px]"><SlideGlyph big={big} /></div>
      </div>
      <div className={"whitespace-pre text-black font-bold font-['Liberation_Serif','Noto_Sans_CJK_JP',serif] [font-feature-settings:'palt'] " + textClass}>{children}</div>
    </div>
  );
}

const Tab = ({ children, w, className }) => (
  <div className={"flex items-center justify-center h-[17px] rounded-tl-[3px] border-t border-l border-white border-r-2 border-r-black text-[12px] " + className}>
    <Squeeze w={w}>{children}</Squeeze>
  </div>
);

function OutlinePane() {
  return (
    <div className="w-[604px] flex flex-col border-l border-black bg-[#bfbfbf]">
      <div className="h-[25px] shrink-0 flex items-end pl-[7px] pb-[3px] text-black [font-feature-settings:'palt']">
        <Tab w={22} className="w-[31px] !border-r-0">標準</Tab>
        <Tab w={58} className="w-[68px] !h-[19px] font-bold !border-r">アウトライン</Tab>
        <Tab w={27} className="w-[36px] ml-px">ノート</Tab>
        <Tab w={44} className="w-[55px] ml-px">配付資料</Tab>
        <Tab w={57} className="w-[68px] ml-px">スライド一覧</Tab>
      </div>
      <div className="h-[882px] flex">
        <div className="w-[587px] flex flex-col bg-white overflow-hidden h-[882px]">
          <Section n="1" big className="h-[96px] mt-[14px]" textClass="ml-[4px] mt-[-15px] text-[43px] leading-[49px] *:h-[49px]">
            <div><Spread w={411}>Androidソースコード</Spread></div>
            <div className="ml-px"><Spread w={261}>公開後のJNI</Spread></div>
          </Section>
          <Section n="2" className="h-[309px]" textClass="ml-[3px] mt-[29.500px] text-[39px] leading-[44.7px] *:h-[44.7px]">
            <div><Spread w={432}>■JNIはJavaとネイティブ</Spread></div>
            <div className="ml-[2px]"><Spread w={404}>（Javaより下の層、C言</Spread></div>
            <div><Spread w={430}>語やC++で書かれる）と</Spread></div>
            <div><Spread w={417}>連携する為に整備され</Spread></div>
            <div><Spread w={274}>た仕組みです。</Spread></div>
          </Section>
          <Section n="3" className="h-[345px]" textClass="ml-[2px] mt-[28px] text-[39px] leading-[44px]">
            <div className="h-[47.5px] ml-[3px] flex"><span className="font-['Noto_Sans_CJK_JP'] text-[36px]">■</span><span className="ml-[5px]"><Spread w={181}>なぜJNI？</Spread></span></div>
            <div className="text-[28.5px] leading-[32.1px] *:h-[32.1px]">
              <div className="ml-[33px]"><Spread w={393}>・ネイティブに存在する資産を</Spread></div>
              <div className="ml-px"><Spread w={136}>使えます。</Spread></div>
              <div className="ml-[33px]"><Spread w={189}>・速度が速い。</Spread></div>
              <div className="ml-[33px]"><Spread w={399}>・現在のAndroidに存在しない</Spread></div>
              <div className="flex"><Spread w={282}>APIを拡張するとなる</Spread><span className="w-[2px] h-[32px] mt-[3px] bg-black" /><Spread w={151}>と必須の技</Spread></div>
              <div className="ml-px"><Spread w={109}>術です。</Spread></div>
              <div className="ml-[43px]"><Spread w={380}>・ AndroidのパッケージもJNI</Spread></div>
              <div><Spread w={256}>で実現されている。</Spread></div>
            </div>
          </Section>
          <Section n="4" className="h-[120px]" textClass="ml-[2px] mt-[27px] text-[33px] leading-[37.5px] *:h-[37.500px]">
            <div className="ml-[2px] flex"><span className="font-['Noto_Sans_CJK_JP'] text-[30px]">■</span><span className="ml-[4px]"><Spread w={362}>ハンズオンと言いながら</Spread></span></div>
            <div className="mt-[2px]"><Spread w={428}>JNIの使い方は説明しません</Spread></div>
          </Section>
        </div>
        <div className="w-[16px] flex flex-col bg-[#cbcbcb]">
          <BarButton d={upD} off />
          <div className="h-[150px] bg-[#bfbfbf] border-t-2 border-l border-t-white border-l-white border-b border-r border-b-black border-r-black" />
          <BarButton d={downD} className="mt-auto" />
        </div>
      </div>
      <div className="h-[15px] w-[587px] flex bg-[#cbcbcb] shrink-0">
        <BarButton d={leftD} off className="!h-[15px]" />
        <div className="w-[297px] h-[15px] bg-[#bfbfbf] border-t border-l-2 border-t-white border-l-white border-b border-r border-b-black border-r-black" />
        <BarButton d={rightD} className="ml-auto !h-[15px]" />
      </div>
    </div>
  );
}

const StatusSep = ({ className }) => <div className={"w-[2px] h-[16px] border-l border-[#777] border-r border-r-white shrink-0 " + className} />;
const ZoomDot = ({ plus }) => (
  <svg width="12" height="12" viewBox="0 0 12 12" className="shrink-0"><circle cx="6" cy="6" r="5.200" fill="#e6eff6" stroke="#6585a5" /><path d={plus ? "M3 6h6M6 3v6" : "M3 6h6"} stroke="#1f5f9c" strokeWidth="1.500" /></svg>
);

function Impress() {
  return (
    <div className="w-[948px] h-[1048px] shrink-0 flex flex-col rounded-t-[6px] overflow-hidden shadow-[0_3px_10px_rgba(0,0,0,.8)] bg-[#bfbfbf] relative">
      <div className="h-[28px] shrink-0 bg-linear-to-b from-[#53524c] to-[#3c3b37] border-t border-[#66655d] flex items-center pl-[21px] pb-[2px] text-[#dfdbd2] text-[15px]">
        <Squeeze w={234} className="font-bold">sample.ppt - LibreOffice Impress</Squeeze>
        <RoundButton kind="min" className="ml-[631px] fill-[#7c7a72]" />
        <RoundButton kind="max" className="ml-[2px] fill-[#7c7a72]" />
        <RoundButton kind="close" className="ml-[2px] fill-[#ea5f2d]" />
      </div>
      <div className="h-[18px] shrink-0 flex items-center pl-[6px] bg-linear-to-r from-[#bdbdbd] to-[#f2f2f2] text-black text-[12px] [font-feature-settings:'palt']">
        <Squeeze w={50}>ファイル(<U>F</U>)</Squeeze>
        <Squeeze w={37} className="ml-[12px]">編集(<U>E</U>)</Squeeze>
        <Squeeze w={37} className="ml-[12px]">表示(<U>V</U>)</Squeeze>
        <Squeeze w={33} className="ml-[12px]">挿入(<U>I</U>)</Squeeze>
        <Squeeze w={39} className="ml-[12px]">書式(<U>O</U>)</Squeeze>
        <Squeeze w={45} className="ml-[12px]">ツール(<U>T</U>)</Squeeze>
        <Squeeze w={77} className="ml-[12px]">スライドショー(<U>S</U>)</Squeeze>
        <Squeeze w={60} className="ml-[12px]">ウィンドウ(<U>W</U>)</Squeeze>
        <Squeeze w={48} className="ml-[12px]">ヘルプ(<U>H</U>)</Squeeze>
        <svg className="ml-[404px]" width="9" height="9" viewBox="0 0 9 9"><path d="M1 1l7 7M8 1L1 8" stroke="#4c5662" strokeWidth="1.600" /></svg>
      </div>
      <div className="shrink-0 bg-[#f1f1f1]"><StandardBar /><TextBar /></div>
      <div className="h-[2px] shrink-0 bg-[#777] border-b border-[#222]" />
      <div className="h-[923px] shrink-0 flex">
        <SlidePane />
        <div className="w-[8px] flex flex-col items-center bg-[#bfbfbf] border-l border-[#777] pt-[444px]">
          <svg width="5" height="36" viewBox="0 0 5 36"><path d="M4 0v4L1 2zM4 31v4L1 33z" /><path d="M2.500 8v20" stroke="#222" strokeDasharray="1.500 2.500" strokeWidth="1.500" /></svg>
        </div>
        <OutlinePane />
        <div className="flex-1 bg-[#e5e5e5]" />
      </div>
      <div className="h-[23px] shrink-0 mt-px flex items-center border-t border-white text-black text-[12px]">
        <StatusSep className="ml-[285px]" />
        <StatusSep className="ml-[220px]" />
        <svg className="ml-[3px]" width="14" height="15" viewBox="0 0 14 15"><path d="M.5.500h9l4 4v10H.5z" fill="#fff" stroke="#9d9bd8" /><path d="M3 4h5M3 7h8M3 9.500h8M3 12h8" stroke="#9d9bd8" /></svg>
        <StatusSep className="ml-[8px]" />
        <StatusSep className="ml-[27px]" />
        <Squeeze w={67} className="ml-[3px]">ページ 3 / 19</Squeeze>
        <StatusSep className="ml-[7px]" />
        <Squeeze w={22} className="ml-[4px]">標準</Squeeze>
        <StatusSep className="ml-[90px] mr-[4px]" />
        <ZoomDot />
        <svg width="106" height="12" viewBox="0 0 106 12"><path d="M5 6h96" stroke="#777" strokeWidth="1.500" /><path d="M5 7.300h96" stroke="#eee" /><path d="M52 1v11" stroke="#888" /><circle cx="35" cy="6" r="3.600" fill="#5d8fb5" stroke="#2f5878" /></svg>
        <ZoomDot plus />
        <StatusSep className="ml-[7px]" />
        <Squeeze w={23} className="ml-[7px]">69%</Squeeze>
      </div>
    </div>
  );
}

export default function App() {
  return (
    <div className="w-[1920px] h-[1080px] overflow-hidden flex flex-col font-['Noto_Sans','Noto_Sans_CJK_JP',sans-serif] bg-linear-to-b from-[#d0aaa0] via-[#d49a98] via-58% to-[#20243f] to-65%">
      <TopPanel />
      <div className="flex h-[1056px]">
        <Launcher />
        <div className="w-[2px] shrink-0" />
        <Gedit />
        <Impress />
      </div>
    </div>
  );
}
